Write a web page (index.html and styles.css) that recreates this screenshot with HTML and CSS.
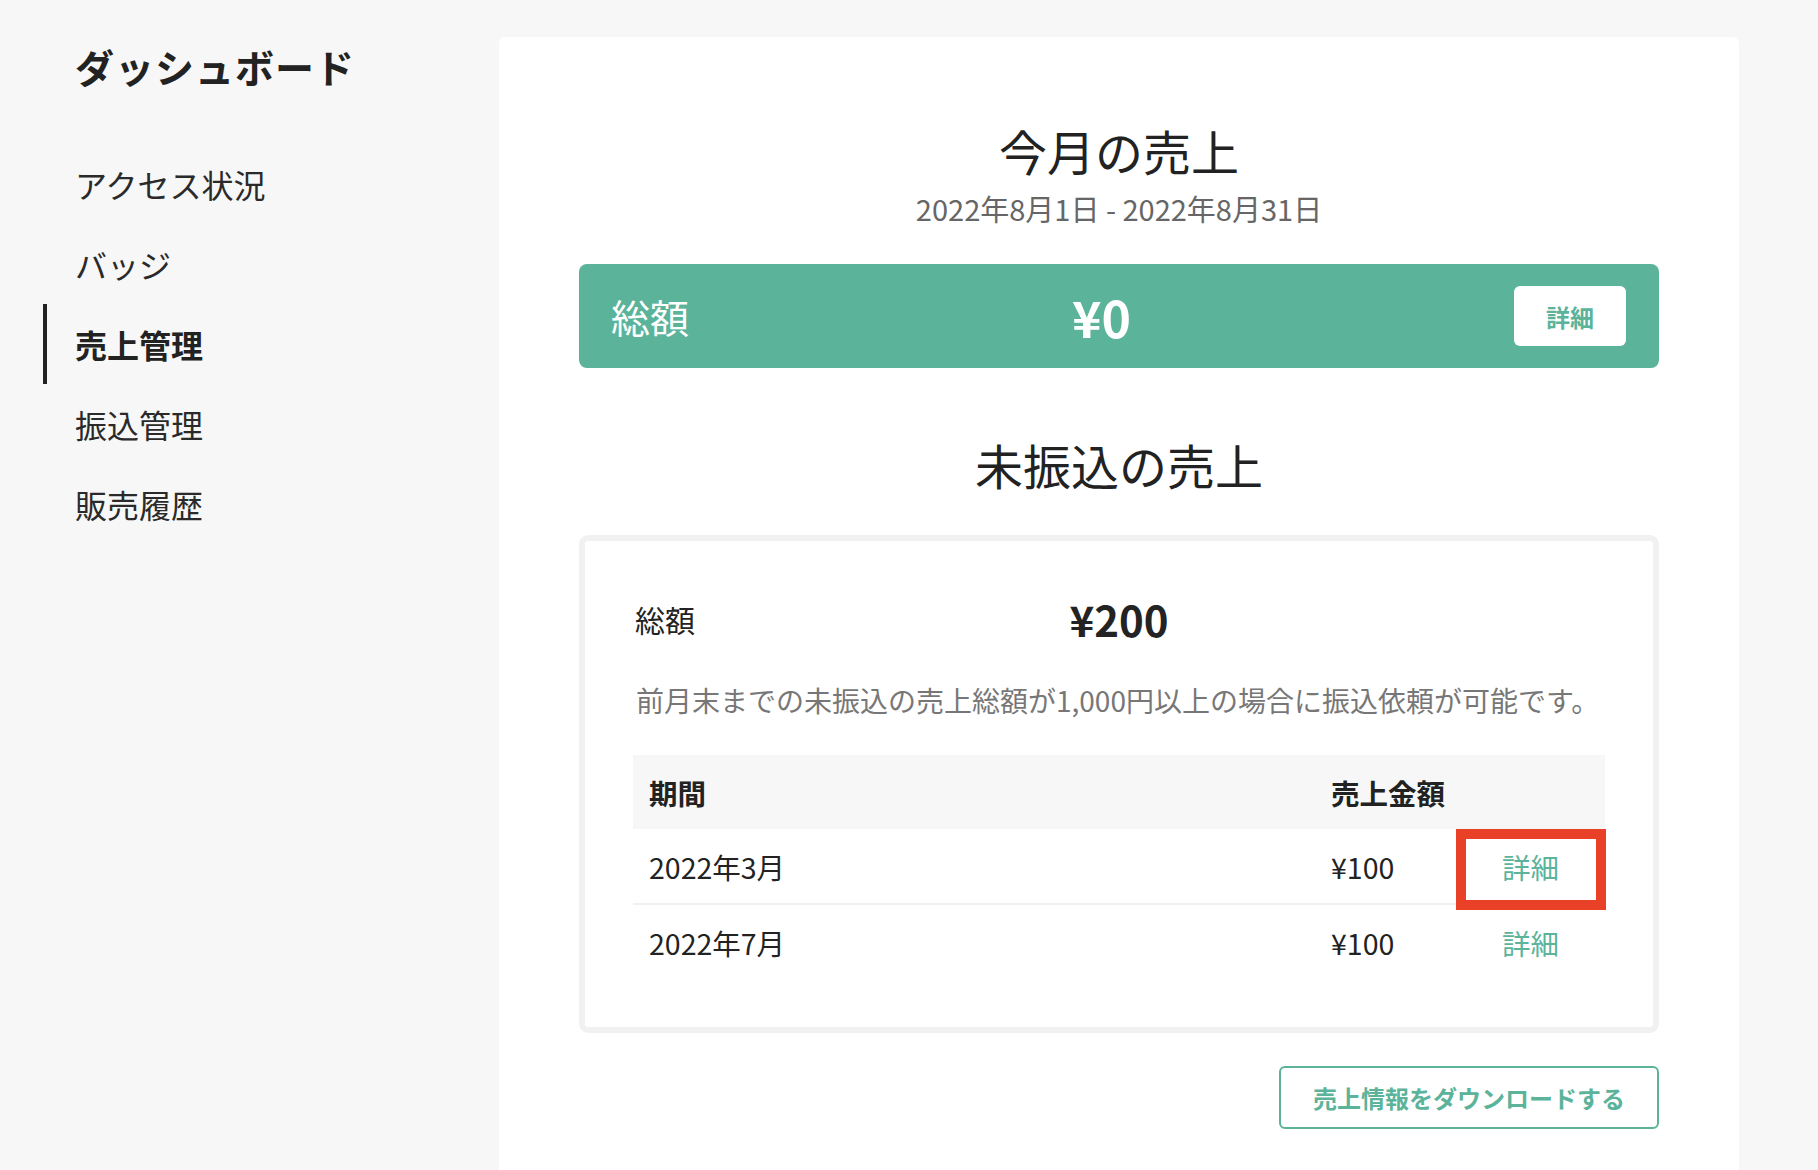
FILE: index.html
```html
<!DOCTYPE html>
<html lang="ja">
<head>
<meta charset="utf-8">
<title>売上管理</title>
<link rel="stylesheet" href="styles.css">
</head>
<body>
<div class="layout">
  <aside class="sidebar">
    <h1 class="brand">ダッシュボード</h1>
    <nav class="nav">
      <a class="nav-item">アクセス状況</a>
      <a class="nav-item">バッジ</a>
      <a class="nav-item active">売上管理</a>
      <a class="nav-item">振込管理</a>
      <a class="nav-item">販売履歴</a>
    </nav>
  </aside>
  <main class="main">
    <section class="card">
      <h2 class="section-title">今月の売上</h2>
      <p class="period">2022年8月1日 - 2022年8月31日</p>
      <div class="total-bar">
        <span class="total-label">総額</span>
        <span class="total-value">¥0</span>
        <button class="detail-btn">詳細</button>
      </div>

      <h2 class="section-title second">未振込の売上</h2>
      <div class="unpaid-box">
        <div class="unpaid-summary">
          <span class="unpaid-label">総額</span>
          <span class="unpaid-value">¥200</span>
          <span></span>
        </div>
        <p class="note">前月末までの未振込の売上総額が1,000円以上の場合に振込依頼が可能です。</p>
        <table class="sales-table">
          <colgroup>
            <col class="col-period">
            <col class="col-amount">
            <col class="col-link">
          </colgroup>
          <thead>
            <tr>
              <th>期間</th>
              <th>売上金額</th>
              <th></th>
            </tr>
          </thead>
          <tbody>
            <tr class="row-sep">
              <td>2022年3月</td>
              <td>¥100</td>
              <td class="link-cell"><a class="detail-link">詳細</a><span class="highlight"></span></td>
            </tr>
            <tr>
              <td>2022年7月</td>
              <td>¥100</td>
              <td class="link-cell"><a class="detail-link">詳細</a></td>
            </tr>
          </tbody>
        </table>
      </div>
      <div class="download-row">
        <button class="download-btn">売上情報をダウンロードする</button>
      </div>
    </section>
  </main>
</div>
</body>
</html>
```
FILE: styles.css
```css
* { box-sizing: border-box; }

html, body {
  margin: 0;
  padding: 0;
  background: #f6f7f6;
  font-family: "Noto Sans CJK JP", "Noto Sans", sans-serif;
  color: #232323;
}

.layout {
  display: flex;
  min-height: 1170px;
}

.sidebar {
  width: 499px;
  flex: none;
  padding-top: 38px;
}

.brand {
  margin: 0 0 50px 75px;
  font-size: 39px;
  line-height: 56px;
  font-weight: 700;
  letter-spacing: 1px;
  color: #222;
}

.nav {
  display: flex;
  flex-direction: column;
  margin-left: 43px;
}

.nav-item {
  display: flex;
  align-items: center;
  height: 80px;
  padding-left: 28px;
  border-left: 4px solid transparent;
  font-size: 32px;
  color: #2a2a2a;
}

.nav-item.active {
  border-left-color: #222;
  font-weight: 700;
  color: #222;
}

.main {
  flex: 1;
  padding-top: 37px;
}

.card {
  width: 1240px;
  min-height: 1133px;
  background: #fff;
  border-radius: 6px 6px 0 0;
  padding: 83px 80px 0 80px;
}

.section-title {
  margin: 0;
  text-align: center;
  font-size: 48px;
  line-height: 60px;
  font-weight: 400;
  color: #222;
}

.section-title.second {
  margin-top: 66px;
}

.period {
  margin: 8px 0 0 0;
  text-align: center;
  font-size: 29px;
  line-height: 40px;
  color: #666;
}

.total-bar {
  margin-top: 36px;
  height: 104px;
  background: #5bb39a;
  border-radius: 8px;
  display: flex;
  align-items: center;
  padding: 0 33px 0 32px;
  color: #fff;
}

.total-label {
  font-size: 39px;
  line-height: 50px;
}

.total-value {
  flex: 1;
  text-align: center;
  font-size: 50px;
  font-weight: 700;
  line-height: 50px;
}

.detail-btn {
  width: 112px;
  height: 60px;
  border: none;
  border-radius: 6px;
  background: #fff;
  color: #5bb39a;
  font-family: inherit;
  font-size: 24px;
  font-weight: 700;
  padding: 0;
}

.unpaid-box {
  margin-top: 41px;
  border: 6px solid #f1f1f1;
  border-radius: 9px;
  padding: 53px 48px 48px 48px;
}

.unpaid-summary {
  display: grid;
  grid-template-columns: 1fr auto 1fr;
  align-items: center;
  height: 50px;
}

.unpaid-label {
  font-size: 30px;
  padding-left: 2px;
}

.unpaid-value {
  font-size: 42px;
  font-weight: 700;
  line-height: 50px;
}

.note {
  margin: 36px 0 0 0;
  font-size: 28px;
  line-height: 40px;
  color: #777;
  padding-left: 3px;
}

.sales-table {
  margin-top: 35px;
  width: 100%;
  border-collapse: collapse;
  table-layout: fixed;
  font-size: 28.5px;
}

.sales-table th {
  height: 74px;
  background: #f6f7f6;
  font-weight: 700;
  text-align: left;
  padding: 0 16px;
  color: #222;
  white-space: nowrap;
}

.sales-table td {
  height: 75px;
  padding: 0 16px;
  color: #222;
  white-space: nowrap;
}

.col-period { width: 682px; }
.col-amount { width: 141px; }
.col-link { width: 149px; }

.row-sep td {
  border-bottom: 2px solid #f1f1f1;
}

.link-cell {
  text-align: center;
  position: relative;
}

.detail-link {
  color: #5bb39a;
}

.highlight {
  position: absolute;
  left: 0;
  top: 0;
  right: -1px;
  bottom: -7px;
  border: 10px solid #e94128;
  pointer-events: none;
}

.download-row {
  display: flex;
  justify-content: flex-end;
  margin-top: 33px;
}

.download-btn {
  height: 63px;
  padding: 0 32px;
  border: 2px solid #5bb39a;
  border-radius: 6px;
  background: #fff;
  color: #5bb39a;
  font-family: inherit;
  font-size: 24px;
  font-weight: 700;
}
```
